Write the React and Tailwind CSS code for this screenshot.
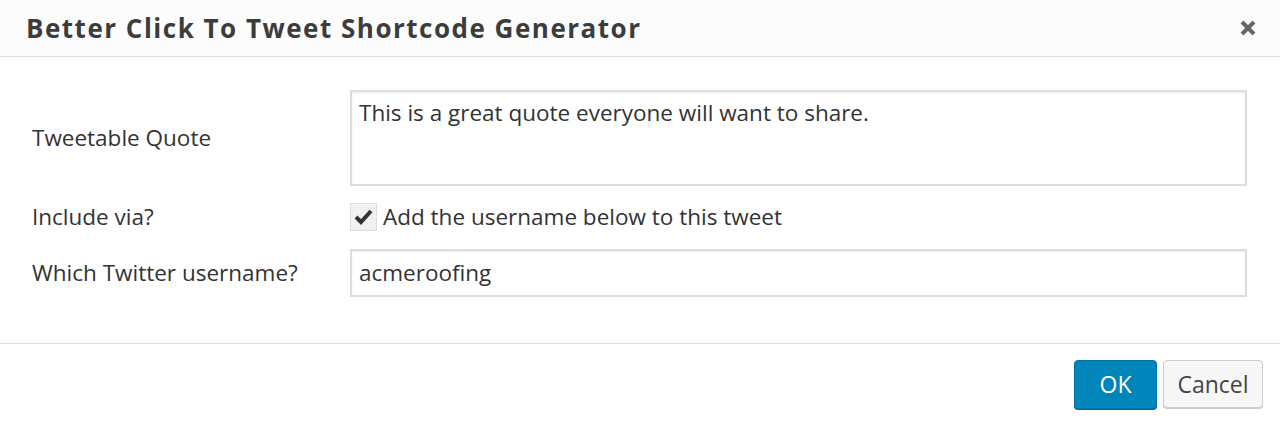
import React from 'react';

const font = { fontFamily: '"Open Sans", "Liberation Sans", Arial, sans-serif' };

export default function App() {
  return (
    <div className="w-[1280px] h-[425px] bg-white text-[#333]" style={font}>
      {/* Header */}
      <div className="h-[57px] bg-[#fcfcfc] border-b border-[#dddddd] flex items-center justify-between pl-[26px] pr-[22px]">
        <h1 className="text-[26px] font-bold text-[#3c3c3c] leading-none tracking-[1.5px]">
          Better Click To Tweet Shortcode Generator
        </h1>
        <button className="w-[20px] h-[20px] flex items-center justify-center">
          <svg width="18" height="18" viewBox="0 0 18 18">
            <path d="M3 3 L15 15 M15 3 L3 15" stroke="#666" strokeWidth="4" strokeLinecap="butt" />
          </svg>
        </button>
      </div>

      {/* Body */}
      <div className="h-[287px] border-b border-[#dddddd] pt-[33px] pl-[32px] pr-[33px] text-[22.5px]">
        <div className="flex items-center">
          <label className="w-[318px]">Tweetable Quote</label>
          <div className="w-[897px] h-[96px] border-2 border-[#dddddd] px-[7px] pt-[4px] text-[#333] shadow-[inset_0_1px_2px_rgba(0,0,0,0.07)]">
            This is a great quote everyone will want to share.
          </div>
        </div>

        <div className="flex items-center mt-[14px]">
          <label className="w-[318px]">Include via?</label>
          <div className="flex items-center gap-[6px]">
            <span className="w-[27px] h-[28px] bg-[#f1f1f1] border border-[#dddddd] flex items-center justify-center">
              <svg width="19" height="16" viewBox="0 0 19 16">
                <path d="M2 8 L7 13 L17 2" stroke="#333" strokeWidth="4" fill="none" />
              </svg>
            </span>
            <span>Add the username below to this tweet</span>
          </div>
        </div>

        <div className="flex items-center mt-[15px]">
          <label className="w-[318px]">Which Twitter username?</label>
          <div className="w-[897px] h-[48px] border-2 border-[#dddddd] px-[7px] flex items-center shadow-[inset_0_1px_2px_rgba(0,0,0,0.07)]">
            acmeroofing
          </div>
        </div>
      </div>

      {/* Footer */}
      <div className="flex justify-end gap-[6px] pt-[16px] pr-[17px]">
        <button className="w-[83px] h-[49px] bg-[#0085ba] border border-[#0073aa] rounded-[4px] text-white text-[23px] shadow-[0_1px_0_#006799]">
          OK
        </button>
        <button className="w-[100px] h-[48px] bg-[#f7f7f7] border border-[#cccccc] rounded-[4px] text-[#444] text-[23px] shadow-[0_1px_0_#cccccc]">
          Cancel
        </button>
      </div>
    </div>
  );
}
